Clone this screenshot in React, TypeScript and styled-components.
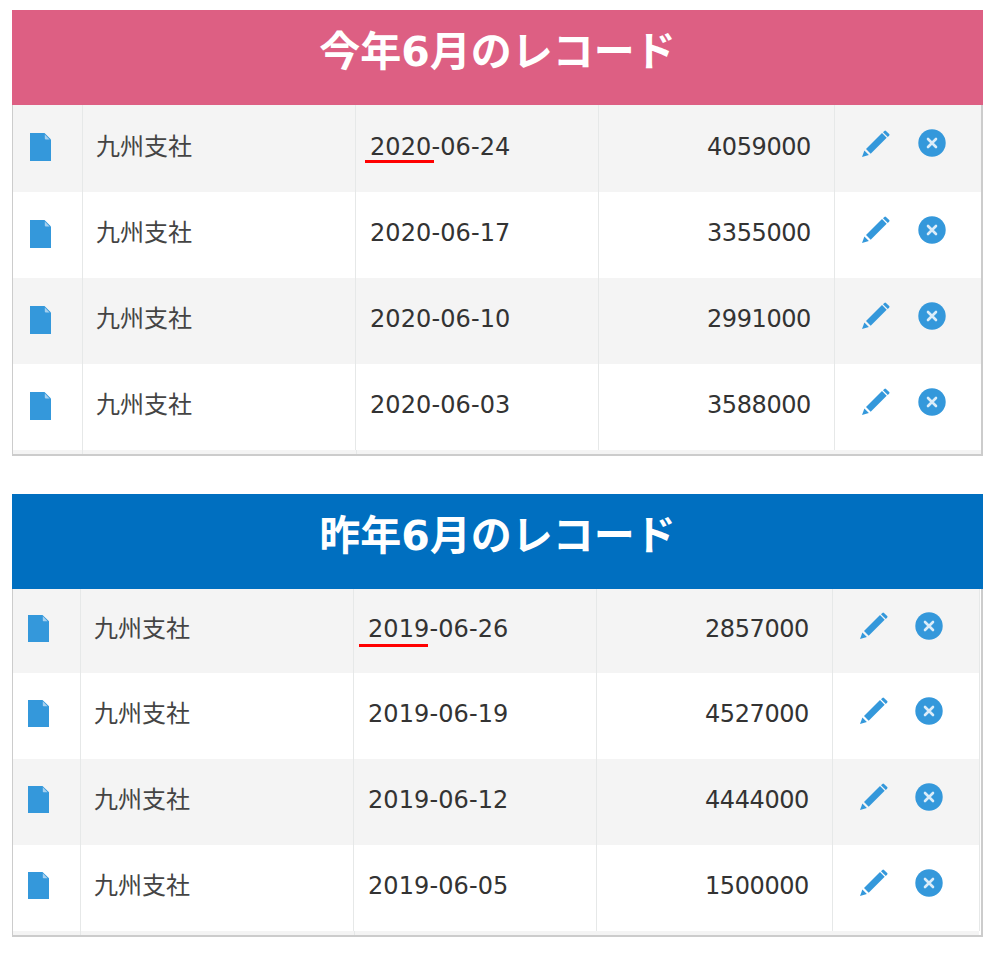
import React from "react";
import styled, { createGlobalStyle } from "styled-components";

const Global = createGlobalStyle`
  html, body { margin: 0; padding: 0; background: #fff; }
  body { font-family: "DejaVu Sans", "Noto Sans CJK JP", sans-serif; color: #333; }
`;

const Page = styled.div`
  width: 971px;
  margin-left: 12px;
  padding-top: 10px;
  display: flex;
  flex-direction: column;
  gap: 38px;
`;

const Panel = styled.section`
  display: flex;
  flex-direction: column;
`;

const Title = styled.h2<{ $bg: string }>`
  margin: 0;
  height: 95px;
  line-height: 84px;
  text-align: center;
  color: #fff;
  background: ${(p) => p.$bg};
  font-family: "DejaVu Sans", "Noto Sans CJK JP", sans-serif;
  font-size: 41px;
  font-weight: 700;
`;

const Frame = styled.div<{ $gap: number }>`
  border-left: 1px solid #ccc;
  border-right: 2px solid #ccc;
  border-bottom: 2px solid #ccc;
  padding-right: ${(p) => p.$gap}px;
`;

const Table = styled.table<{ $gap: number }>`
  width: 100%;
  table-layout: fixed;
  border-collapse: separate;
  border-spacing: 0;
  font-size: 24px;
  border-right: ${(p) => (p.$gap ? "1px solid #e6e8e8" : "0")};
`;

const Row = styled.tr<{ $h: number }>`
  height: ${(p) => p.$h}px;
  &:nth-child(odd) { background: #f4f4f4; }
  &:nth-child(even) { background: #fff; }
`;

const Cell = styled.td<{ $pad: string; $right?: boolean }>`
  position: relative;
  box-sizing: border-box;
  padding: ${(p) => p.$pad};
  vertical-align: middle;
  text-align: ${(p) => (p.$right ? "right" : "left")};
  border-right: 1px solid #e6e8e8;
  white-space: nowrap;
  line-height: 28px;
  &:last-child { border-right: 0; }
`;

const Branch = styled.span`
  color: #444;
`;

const DateText = styled.span`
  letter-spacing: 0.1px;
`;

const Amount = styled.span`
  letter-spacing: -0.4px;
`;

const Mark = styled.span<{ $left: number; $bottom: number }>`
  position: absolute;
  left: ${(p) => p.$left}px;
  bottom: ${(p) => p.$bottom}px;
  width: 69px;
  height: 3px;
  background: #f00;
`;

const Actions = styled.div<{ $gap: number }>`
  display: flex;
  align-items: center;
  gap: ${(p) => p.$gap}px;
`;

const Strip = styled.div<{ $edge: number }>`
  height: 4px;
  background: #f4f4f4;
  position: relative;
  &::before, &::after { content: ""; position: absolute; top: 0; bottom: 0; width: 1px; background: #e6e8e8; }
  &::before { left: ${(p) => p.$edge + 68}px; }
  &::after { left: ${(p) => p.$edge + 342}px; }
`;

const Svg = styled.svg<{ $w: number; $h: number }>`
  display: block;
  width: ${(p) => p.$w}px;
  height: ${(p) => p.$h}px;
`;

const FileIcon = ({ h }: { h: number }) => (
  <Svg $w={21} $h={h} viewBox="0 0 21 28" preserveAspectRatio="none">
    <path d="M0 0H14.5L21 6.5V28H0Z" fill="#3498db" />
    <path d="M14.8 1.4L19.6 6.4H15.6Q14.8 6.4 14.8 5.6Z" fill="#a6d0ef" />
  </Svg>
);

const PencilIcon = () => (
  <Svg $w={28} $h={27} viewBox="0 0 28 27">
    <path d="M4 19L20 3L24.7 7.7L8.7 23.7Z" fill="#3498db" />
    <path d="M21 2.2L22.4 0.9Q23.2 0.2 24 0.9L27.2 4Q27.9 4.8 27.2 5.6L25.8 7Z" fill="#3498db" />
    <path d="M2.4 20.6L6.9 25.1L0 27Z" fill="#3498db" />
  </Svg>
);

const CloseIcon = () => (
  <Svg $w={28} $h={28} viewBox="0 0 28 28">
    <circle cx="14" cy="14" r="13.7" fill="#3498db" />
    <path d="M10 10L18 18M18 10L10 18" stroke="#dcedf9" strokeWidth="2.6" strokeLinecap="round" />
  </Svg>
);

type Data = {
  title: string;
  bg: string;
  widths: number[];
  firstPad: number;
  filePadBottom: number;
  actionPad: number;
  actionGap: number;
  gap: number;
  fileH: number;
  heights: number[];
  markLeft: number;
  markBottom: number;
  rows: [string, string][];
};

const panels: Data[] = [
  {
    title: "今年6月のレコード",
    bg: "#dd5f83",
    widths: [70, 273, 243, 236, 146],
    firstPad: 17,
    filePadBottom: 3,
    actionPad: 27,
    actionGap: 28,
    gap: 0,
    fileH: 28,
    heights: [87, 86, 86, 86],
    markLeft: 9,
    markBottom: 29,
    rows: [
      ["2020-06-24", "4059000"],
      ["2020-06-17", "3355000"],
      ["2020-06-10", "2991000"],
      ["2020-06-03", "3588000"],
    ],
  },
  {
    title: "昨年6月のレコード",
    bg: "#006fc0",
    widths: [68, 273, 243, 236, 146],
    firstPad: 15,
    filePadBottom: 5,
    actionPad: 27,
    actionGap: 27,
    gap: 2,
    fileH: 27,
    heights: [84, 86, 86, 86],
    markLeft: 5,
    markBottom: 26,
    rows: [
      ["2019-06-26", "2857000"],
      ["2019-06-19", "4527000"],
      ["2019-06-12", "4444000"],
      ["2019-06-05", "1500000"],
    ],
  },
];

export default function App() {
  return (
    <Page>
      <Global />
      {panels.map((p) => (
        <Panel key={p.title}>
          <Title $bg={p.bg}>{p.title}</Title>
          <Frame $gap={p.gap}>
            <Table $gap={p.gap}>
              <colgroup>
                {p.widths.map((w, i) => (
                  <col key={i} style={{ width: w }} />
                ))}
              </colgroup>
              <tbody>
                {p.rows.map(([date, amount], i) => (
                  <Row key={date} $h={p.heights[i]}>
                    <Cell $pad={`0 0 ${p.filePadBottom}px ${p.firstPad}px`}>
                      <FileIcon h={p.fileH} />
                    </Cell>
                    <Cell $pad="0 0 4px 13px">
                      <Branch>九州支社</Branch>
                    </Cell>
                    <Cell $pad="0 0 4px 14px">
                      <DateText>{date}</DateText>
                      {i === 0 && <Mark $left={p.markLeft} $bottom={p.markBottom} />}
                    </Cell>
                    <Cell $pad="0 23px 4px 0" $right>
                      <Amount>{amount}</Amount>
                    </Cell>
                    <Cell $pad={`0 0 11px ${p.actionPad}px`}>
                      <Actions $gap={p.actionGap}>
                        <PencilIcon />
                        <CloseIcon />
                      </Actions>
                    </Cell>
                  </Row>
                ))}
              </tbody>
            </Table>
            <Strip $edge={p.widths[0] - 70 + 1} />
          </Frame>
        </Panel>
      ))}
    </Page>
  );
}
